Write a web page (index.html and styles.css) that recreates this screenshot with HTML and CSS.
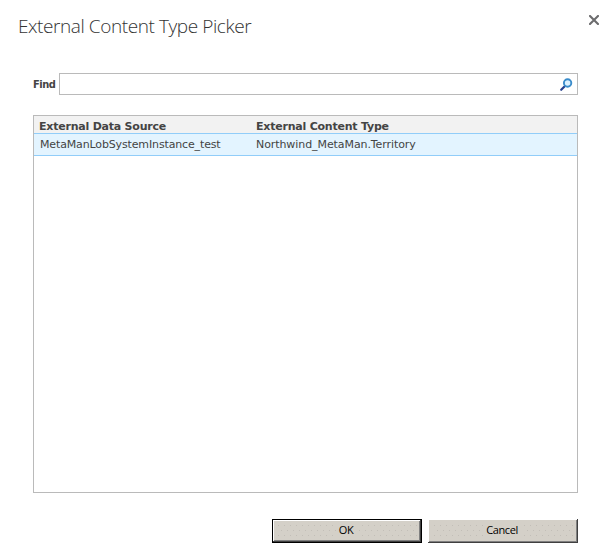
FILE: index.html
```html
<!DOCTYPE html>
<html lang="en">
<head>
<meta charset="utf-8">
<title>External Content Type Picker</title>
<link rel="stylesheet" href="styles.css">
</head>
<body>
<main class="dialog">
  <header class="titlebar">
    <h1 class="title">External Content Type Picker</h1>
    <svg class="close" width="10" height="10" viewBox="0 0 10 10"><path d="M1 1l8 8M9 1L1 9" stroke="#6c6c6e" stroke-width="2.1" stroke-linecap="square"/></svg>
  </header>
  <div class="find">
    <span class="find-label">Find</span>
    <div class="find-box">
      <svg width="14" height="14" viewBox="0 0 14 14">
        <path d="M2.2 11.8L5.5 8.5" stroke="#26408f" stroke-width="2.2" stroke-linecap="round"/>
        <circle cx="8.6" cy="5" r="3.7" fill="#dcf1ff" stroke="#3a8ccb" stroke-width="1.9"/>
      </svg>
    </div>
  </div>
  <section class="table">
    <div class="row head"><span class="c1">External Data Source</span><span class="c2">External Content Type</span></div>
    <div class="row selected"><span class="c1">MetaManLobSystemInstance_test</span><span class="c2">Northwind_MetaMan.Territory</span></div>
  </section>
  <footer class="actions">
    <button class="btn default"><span class="face"><span class="caption">OK</span></span></button>
    <button class="btn"><span class="face"><span class="caption">Cancel</span></span></button>
  </footer>
</main>
</body>
</html>
```
FILE: styles.css
```css
* { box-sizing: border-box; }
body { margin: 0; background: #fff; color: #444; font-family: "DejaVu Sans", sans-serif; font-size: 11px; }
.dialog { width: 606px; height: 558px; padding: 0 28px 0 33px; display: flex; flex-direction: column; }
.titlebar { height: 73px; margin: 0 -22px 0 -15px; display: flex; justify-content: space-between; }
.title { margin: 12px 0 0; color: #333; font: 300 19px/28px "Open Sans", sans-serif; white-space: nowrap; letter-spacing: -0.42px; }
.close { margin: 15px 1px 0 0; }
.find { display: flex; height: 22px; }
.find-label { width: 26px; line-height: 23px; font-family: "DejaVu Sans Condensed", "DejaVu Sans", sans-serif; font-weight: bold; letter-spacing: -0.5px; }
.find-box { flex: 1; border: 1px solid #bababa; display: flex; justify-content: flex-end; padding: 4px 4px 0 0; }
.table { margin-top: 20px; height: 378px; border: 1px solid #bababa; }
.row { display: flex; white-space: nowrap; }
.head { height: 17px; background: #f2f2f2; font-weight: bold; line-height: 21px; padding-left: 5px; letter-spacing: -0.22px; }
.selected { height: 23px; background: #e3f4ff; border: solid #91cdf9; border-width: 1px 0; line-height: 21px; padding-left: 6px; letter-spacing: -0.14px; }
.c1 { width: 217px; }
.selected .c1 { width: 216px; }
.selected .c2 { letter-spacing: -0.08px; }
.actions { display: flex; justify-content: flex-end; gap: 6px; margin-top: 26px; }
.btn { width: 150px; height: 24px; padding: 0; color: #000; font: 11px/16px "Open Sans", sans-serif; letter-spacing: -0.4px; border: 0; background: #d4d0c8; box-shadow: inset -1px -1px #404040, inset 1px 1px #fff, inset -2px -2px #808080; }
.btn.default { border: 1px solid #000; }
.face {
  display: flex; justify-content: center; width: 140px; height: 14px; margin: 0 auto;
  background-image: radial-gradient(circle at 1.5px 1.5px, #c2beb7 0.6px, transparent 0.8px), radial-gradient(circle at 4.5px 6.5px, #c2beb7 0.6px, transparent 0.8px);
  background-size: 6px 10px;
}
.caption { padding: 0 5px 0 3px; height: 14px; line-height: 12px; background: #d4d0c8; }
```
